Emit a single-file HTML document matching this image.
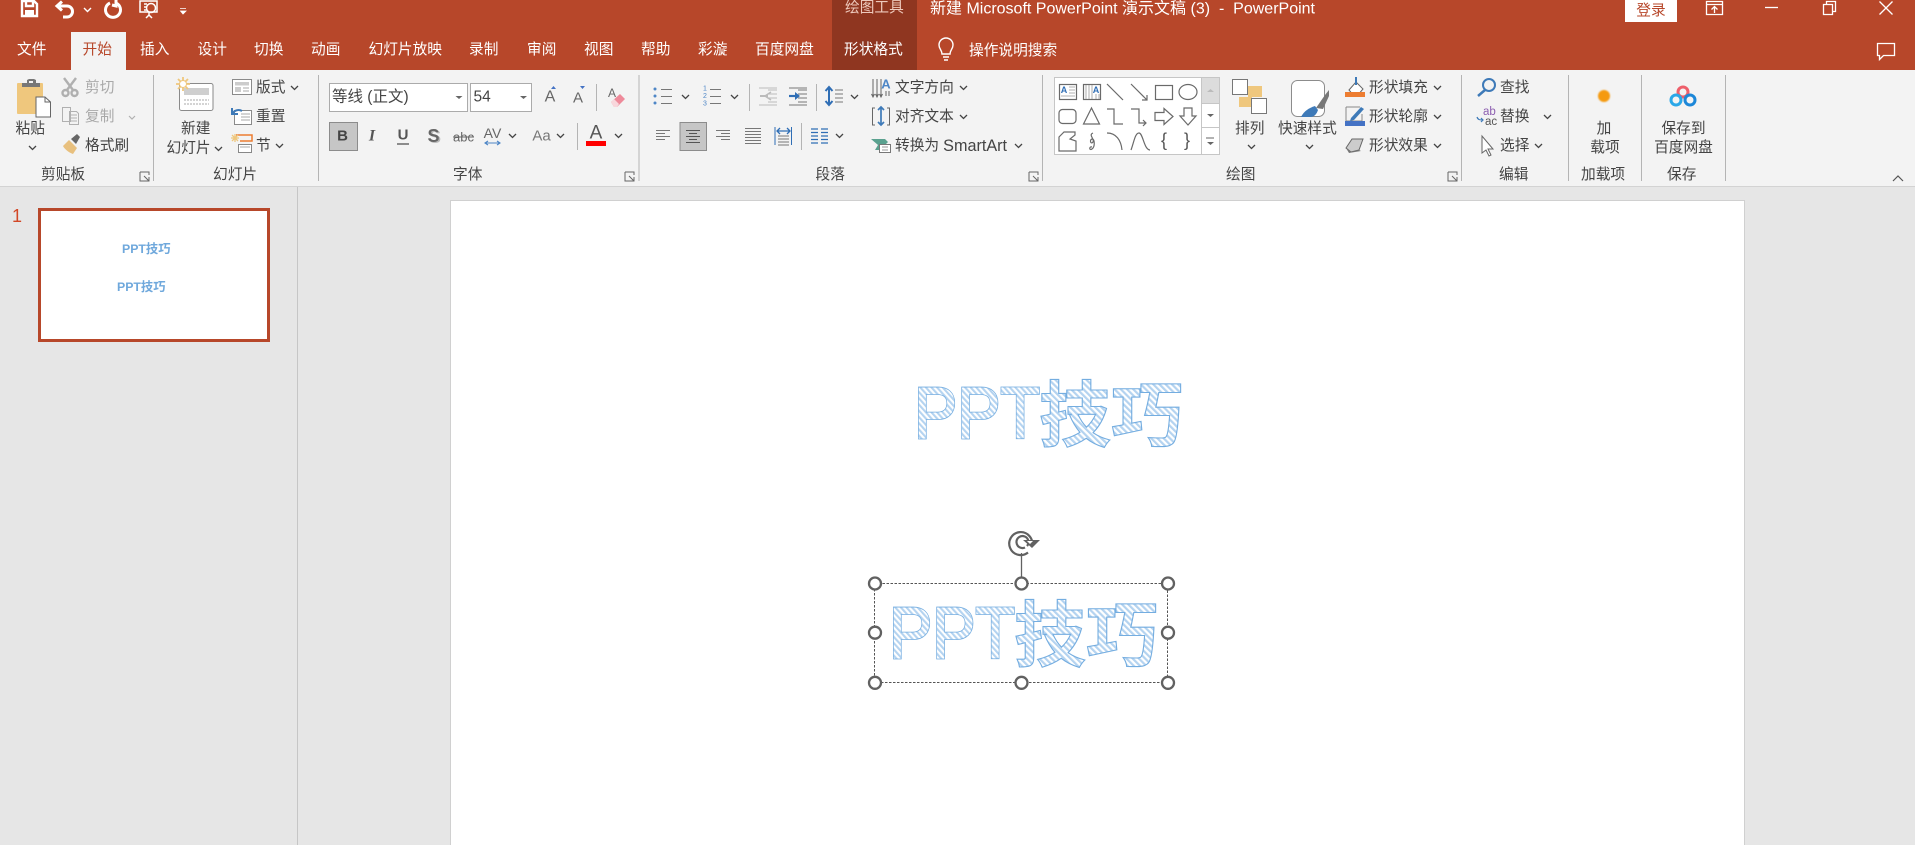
<!DOCTYPE html>
<html lang="zh"><head><meta charset="utf-8"><title>PowerPoint</title>
<style>
html,body{margin:0;padding:0;width:1915px;height:845px;overflow:hidden;background:#e6e6e6}
svg{display:block;position:absolute;left:0;top:0}
text{font-family:"Liberation Sans","Noto Sans CJK SC",sans-serif;dominant-baseline:central;font-size:14.7px;fill:#444;stroke:none}
.w text,text.w{fill:#fff}
.g text{fill:#a9a9a9}
.m{text-anchor:middle}
.i{fill:none;stroke:#6a6a6a;stroke-width:1.2}
.q{fill:none;stroke:#fff;stroke-width:2}
text.t{font-family:"Liberation Sans",sans-serif;font-size:72px;fill:url(#h);stroke:#74ade0;stroke-width:2.8;dominant-baseline:alphabetic}
text.t2{font-family:"Liberation Sans",sans-serif;font-size:72px;fill:url(#h);stroke:url(#h);stroke-width:1.2;dominant-baseline:alphabetic}
text.k{font-family:"Noto Sans CJK SC",sans-serif;font-weight:bold;font-size:72px;fill:url(#h);stroke:#74ade0;stroke-width:1.1;dominant-baseline:alphabetic}
</style></head><body>
<svg width="1915" height="845" viewBox="0 0 1915 845" xmlns="http://www.w3.org/2000/svg">
<defs>
<pattern id="h" patternUnits="userSpaceOnUse" width="4.4" height="4.4" patternTransform="rotate(-45)"><rect width="4.4" height="4.4" fill="#fff"/><rect width="2.2" height="4.4" fill="#b4d3f0"/></pattern>
<path id="c" d="M0 0l3.500 3.500L7 0" fill="none" stroke="#444" stroke-width="1.300"/>
<path id="da" d="M0 0h7l-3.500 3z" fill="#666"/>
<path id="l" d="M0 0v9h9M4 4l5 5M9 5v4H5M0 0h9v3" fill="none" stroke="#666" stroke-width="1"/>
</defs>
<rect width="1915" height="845" fill="#e6e6e6"/>
<!-- title + tabs -->
<rect width="1915" height="70" fill="#b7472a"/>
<rect x="832" width="85" height="70" fill="#8f3620"/>
<rect x="71" y="32" width="55" height="38" fill="#f3f3f3"/>
<!-- QAT -->
<g class="q">
<path d="M22 1h12l3 3v12H22zM26 1v5h7V1" stroke-width="2.400"/>
<rect x="25" y="10" width="9" height="6" fill="#fff" stroke="none"/>
<path d="M58 6h9a5.500 5.500 0 0 1 0 11h-4M62 1.500L57 6l5 4.500" stroke-width="3"/>
<path d="M110 3a7.500 7.500 0 1 0 6 0M116 0v6l-4-1" stroke-width="3"/>
<path d="M140 1h17v11h-17zM144 4h3M144 7h3M144 10h3M149 15l-3 3M149 15l3 3M149 12v4" stroke-width="1.500"/>
<circle cx="151" cy="8" r="4.500" stroke-width="1.500"/>
</g>
<path d="M84 8l3.500 3.500L91 8" fill="none" stroke="#fff" stroke-width="1.400"/>
<path d="M180 8.500h6M180.500 11h5.500l-3 3z" fill="#fff" stroke="#fff" stroke-width=".8"/>
<g class="w">
<text x="17" y="50">文件</text><text x="140" y="50">插入</text><text x="197.500" y="50">设计</text><text x="254" y="50">切换</text><text x="311" y="50">动画</text><text x="368.500" y="50">幻灯片放映</text><text x="469" y="50">录制</text><text x="527" y="50">审阅</text><text x="584" y="50">视图</text><text x="641" y="50">帮助</text><text x="698" y="50">彩漩</text><text x="755" y="50">百度网盘</text><text x="844" y="50">形状格式</text><text x="969" y="51">操作说明搜索</text>
<text x="930" y="9" style="font-size:16px">新建 Microsoft PowerPoint 演示文稿 (3)&#160;&#160;-&#160;&#160;PowerPoint</text>
</g>
<text x="82.500" y="50" style="fill:#b7472a">开始</text>
<text x="845" y="8" style="fill:#eec9bc">绘图工具</text>
<path d="M942 54c0-4-3-5-3-9a7 7 0 0 1 14 0c0 4-3 5-3 9zM943 57h6M944 60h4" fill="none" stroke="#fff" stroke-width="1.400"/>
<rect x="1625" width="52" height="22" fill="#fff"/>
<text x="1651" y="11" class="m" style="fill:#b7472a">登录</text>
<g fill="none" stroke="#fff" stroke-width="1.300">
<path d="M1706.500 1.500h16v13h-16zM1706.500 4.500h16M1714.500 13V7M1711.500 9.500l3-3 3 3"/>
<path d="M1765 7.500h13"/>
<path d="M1823.500 4.500h9v10h-9zM1826.500 4.500v-3h9v10h-3"/>
<path d="M1879.500 1.500l13 13M1892.500 1.500l-13 13"/>
<path d="M1877.500 43.500h17v12h-11l-4 4v-4h-2z"/>
</g>
<!-- ribbon -->
<rect y="70" width="1915" height="116" fill="#f3f3f3"/>
<rect y="186" width="1915" height="1" fill="#d3d3d3"/>
<g fill="#b4b4b4">
<rect x="153" y="75" width="1" height="106"/><rect x="318" y="75" width="1" height="106"/><rect x="638.500" y="75" width="1" height="106"/><rect x="1042" y="75" width="1" height="106"/><rect x="1461" y="75" width="1" height="106"/><rect x="1568" y="75" width="1" height="106"/><rect x="1641" y="75" width="1" height="106"/><rect x="1725" y="75" width="1" height="106"/>
<rect x="596" y="84" width="1" height="27"/><rect x="577" y="123" width="1" height="27"/><rect x="749" y="84" width="1" height="27"/><rect x="816" y="84" width="1" height="27"/><rect x="801" y="123" width="1" height="27"/>
</g>
<text x="41" y="175">剪贴板</text><text x="213" y="175">幻灯片</text><text x="453" y="175">字体</text><text x="815.500" y="175">段落</text><text x="1226" y="175">绘图</text><text x="1499" y="175">编辑</text><text x="1581" y="175">加载项</text><text x="1667" y="175">保存</text>
<use href="#l" x="140" y="172"/><use href="#l" x="625" y="172"/><use href="#l" x="1029" y="172"/><use href="#l" x="1448" y="172"/>
<path d="M1893 181l5-5 5 5" fill="none" stroke="#555" stroke-width="1.200"/>
<!-- clipboard -->
<rect x="17" y="83" width="26" height="31" rx="1" fill="#efc77d"/>
<path d="M22 87v-4h5v-3l2-1h5l2 1v3h4v4z" fill="#777"/><rect x="29" y="81" width="4" height="2" fill="#f3f3f3"/>
<path d="M36 97h9l5.500 5v15H36z" fill="#fff" stroke="#666"/><path d="M45 97v5h5.500" fill="none" stroke="#666"/>
<text x="15.500" y="129">粘贴</text><use href="#c" x="29" y="146"/>
<g fill="none" stroke="#b0b0b0" stroke-width="2.400"><path d="M64 78l9 12M76 78l-9 12"/><circle cx="65.500" cy="93" r="3"/><circle cx="74.500" cy="93" r="3"/></g>
<g fill="#f3f3f3" stroke="#b0b0b0"><path d="M62.500 107.500h8v14h-8zM69.500 111.500h7l2 2v11h-9z"/><path d="M71 115h6M71 118h6M71 121h6"/></g>
<g class="g"><text x="85" y="88">剪切</text><text x="85" y="117">复制</text></g>
<path d="M129 116l3 3 3-3" fill="none" stroke="#b0b0b0" stroke-width="1.200"/>
<path d="M63 146l6-6 8 8-4 6c-3-1-8-4-10-8z" fill="#e8c07e"/><path d="M71 139l6-5 3 3-4 7z" fill="#666"/>
<text x="85" y="146">格式刷</text>
<!-- slides -->
<rect x="179.500" y="83.500" width="33.500" height="27" rx="2" fill="#fff" stroke="#8a8a8a"/>
<rect x="184" y="88" width="25" height="7" fill="#cfcfcf"/><path d="M184 100h25M184 104h25" stroke="#aaa" stroke-dasharray="2 1"/>
<path d="M183 77v14M176 84h14M178 79l10 10M188 79l-10 10" stroke="#efc77d" stroke-width="1.800"/><circle cx="183" cy="84" r="3.500" fill="#fff" stroke="#efc77d"/>
<text x="181" y="129">新建</text><text x="166.500" y="148.500">幻灯片</text><use href="#c" x="215" y="147"/>
<rect x="232.500" y="79.500" width="19" height="15" fill="#fff" stroke="#8a8a8a"/><rect x="235" y="82" width="14" height="3.500" fill="#ccc"/><rect x="235" y="87" width="6" height="5" fill="#ccc"/><path d="M243 88h6M243 91h6" stroke="#aaa"/>
<text x="256" y="88">版式</text><use href="#c" x="291" y="86"/>
<rect x="234.500" y="110.500" width="17" height="14" fill="#fff" stroke="#8a8a8a"/><path d="M241 114h9M241 117h9M241 120h9" stroke="#aaa"/>
<path d="M233 113a6 5 0 0 1 9-2M232 108v6h6" fill="none" stroke="#3e7ab8" stroke-width="2"/>
<text x="256" y="117">重置</text>
<path d="M236 135h16v6h-12" fill="none" stroke="#ed7d31" stroke-width="1.500"/><rect x="238.500" y="144.500" width="13" height="8" fill="#fff" stroke="#888"/><path d="M240 147h10" stroke="#aaa"/>
<path d="M232 135l6 6M238 135l-6 6M235 134v8M231 138h8" stroke="#efc77d" stroke-width="1.300"/>
<text x="256" y="146">节</text><use href="#c" x="276" y="144"/>
<!-- font -->
<rect x="329.500" y="83.500" width="138" height="28" fill="#fff" stroke="#ababab"/><rect x="470.500" y="83.500" width="61" height="28" fill="#fff" stroke="#ababab"/>
<text x="332" y="97" style="font-size:15.500px">等线 (正文)</text><text x="473.500" y="97" style="font-size:15.500px">54</text>
<use href="#da" x="455.500" y="96"/><use href="#da" x="520" y="96"/>
<text x="550" y="97" class="m" style="font-size:16px;fill:#666">A</text><path d="M551 89l2.500-3 2.500 3z" fill="#4472c4"/>
<text x="578" y="98" class="m" style="font-size:15px;fill:#666">A</text><path d="M580 86h5l-2.500 3z" fill="#4472c4"/>
<text x="612" y="93" class="m" style="font-size:12px;fill:#666">A</text><path d="M611 102l9-8 5 5-8 8h-3z" fill="#ee8a9a"/><path d="M611 102l3-3 5 5-2 3h-3z" fill="#f8d7dc"/>
<rect x="329.500" y="122.500" width="28" height="28" fill="#c6c6c6" stroke="#8c8c8c"/>
<text x="342.500" y="136" class="m" style="font-weight:bold;font-size:15px">B</text>
<text x="372" y="136" class="m" style="font-style:italic;font-weight:bold;font-family:'Liberation Serif',serif;font-size:16px;fill:#555">I</text>
<text x="403" y="135" class="m" style="font-size:15px;font-weight:bold;fill:#555">U</text><path d="M397 144h12" stroke="#555" stroke-width="1.300"/>
<text x="435" y="137" class="m" style="font-size:18px;font-weight:bold;fill:#bbb">S</text><text x="433.500" y="136" class="m" style="font-size:18px;font-weight:bold;fill:#666">S</text>
<text x="463.500" y="137" class="m" style="font-size:13px;fill:#666">abc</text><path d="M453 137h21" stroke="#666"/>
<text x="492.500" y="133" class="m" style="font-size:14px;fill:#666">AV</text><path d="M485 143h15M488 141l-3 2 3 2M497 141l3 2-3 2" fill="none" stroke="#4e86c6" stroke-width="1.100"/>
<use href="#c" x="509" y="134"/>
<text x="541.500" y="136" class="m" style="font-size:15px;fill:#777">Aa</text><use href="#c" x="557" y="134"/>
<text x="596" y="133" class="m" style="font-size:19px;fill:#555">A</text><rect x="586" y="141" width="20" height="5" fill="#f00"/>
<use href="#c" x="615" y="134"/>
<!-- paragraph -->
<g stroke="#777" stroke-width="1" fill="none">
<path d="M661 89.500h11M661 96.500h11M661 103.500h11"/><path d="M710 89.500h11M710 96.500h11M710 103.500h11"/>
<path d="M768 90h9M768 94h9M768 98h9M768 102h9M759 105h18M759 88h18" stroke="#bbb"/>
<path d="M798 90h9M798 94h9M798 98h9M798 102h9M789 105h18M789 88h18"/>
<path d="M835 90h8M835 94h8M835 98h8M835 102h8"/>
<path d="M656 130.500h14M656 133.500h9M656 136.500h14M656 139.500h9"/>
<path d="M686 130.500h14M689 133.500h8M686 136.500h14M689 139.500h8"/>
<path d="M716 130.500h14M721 133.500h9M716 136.500h14M721 139.500h9"/>
<path d="M745 128.500h16M745 131.500h16M745 134.500h16M745 137.500h16M745 140.500h16M745 143.500h16" stroke-width="1"/>
</g>
<g fill="#4e86c6"><circle cx="655" cy="89" r="1.500"/><circle cx="655" cy="96" r="1.500"/><circle cx="655" cy="103" r="1.500"/></g>
<text x="703" y="89" style="font-size:7px;fill:#4e86c6">1</text><text x="703" y="96.500" style="font-size:7px;fill:#4e86c6">2</text><text x="703" y="104" style="font-size:7px;fill:#4e86c6">3</text>
<use href="#c" x="682" y="95"/><use href="#c" x="731" y="95"/><use href="#c" x="851" y="95"/><use href="#c" x="836" y="134"/>
<path d="M771 92l-6 4 6 4" fill="none" stroke="#bbb" stroke-width="1.500"/><path d="M760 96h8" stroke="#bbb" stroke-width="2"/>
<path d="M795 92l5 4-5 4z" fill="#2f6eb5"/><path d="M789 96h8" stroke="#2f6eb5" stroke-width="2.200"/>
<path d="M829 87v18M825.500 91l3.500-4 3.500 4M825.500 101l3.500 4 3.500-4" fill="none" stroke="#2f6eb5" stroke-width="2"/>
<rect x="680" y="122.500" width="26.500" height="28" fill="#c6c6c6" stroke="#8c8c8c"/>
<path d="M686 130.500h14M689 133.500h8M686 136.500h14M689 139.500h8M686 142.500h14" stroke="#555"/>
<rect x="774.500" y="127" width="1" height="18" fill="#2f6eb5"/><rect x="791" y="127" width="1" height="18" fill="#2f6eb5"/>
<path d="M778 136h11M778 139h11M778 142h11M778 145h11" stroke="#777"/><path d="M777 131h13M780 128l-3 3 3 3M787 128l3 3-3 3" fill="none" stroke="#2f6eb5" stroke-width="1.300"/>
<path d="M811 129h7M821 129h7M811 132.500h7M821 132.500h7M811 136h7M821 136h7M811 139.500h7M821 139.500h7M811 143h7M821 143h7" stroke="#2f6eb5" stroke-width="1.200"/>
<!-- text options -->
<path d="M873 79v17M877 79v17M881 79v17M871.500 94l1.500 3 1.500-3M875.500 94l1.500 3 1.500-3M879.500 94l1.500 3 1.500-3" fill="none" stroke="#666"/>
<text x="886" y="84" class="m" style="font-size:13px;font-weight:bold;fill:#4e86c6">A</text><path d="M886 91v5M889 91v5" stroke="#666"/>
<text x="895" y="88">文字方向</text><use href="#c" x="960" y="86"/>
<path d="M875 108h-2.500v17h2.500M887 108h2.500v17H887" fill="none" stroke="#666"/>
<path d="M881 107v18M878 110l3-3 3 3M878 122l3 3 3-3" fill="none" stroke="#3e7ab8" stroke-width="1.700"/>
<text x="895" y="117">对齐文本</text><use href="#c" x="960" y="115"/>
<path d="M871 139h14l3 3-3 3 3 3-3 2h-10l3-5z" fill="#5aa18f"/><rect x="879.500" y="144.500" width="11" height="8" fill="#fff" stroke="#777"/><path d="M882 147h6M882 150h6" stroke="#999"/>
<text x="895" y="146">转换为 <tspan style="font-size:16.200px">SmartArt</tspan></text><use href="#c" x="1015" y="144"/>
<!-- gallery -->
<rect x="1054.500" y="77.500" width="165" height="77" fill="#fff" stroke="#c6c6c6"/>
<rect x="1201.500" y="77.500" width="18" height="26" fill="#dcdcdc" stroke="#c6c6c6"/>
<rect x="1201.500" y="103.500" width="18" height="24" fill="#fff" stroke="#c6c6c6"/>
<rect x="1201.500" y="127.500" width="18" height="27" fill="#fff" stroke="#c6c6c6"/>
<path d="M1207 92l3.500-3 3.500 3z" fill="#bbb"/><use href="#da" x="1207" y="114"/><use href="#da" x="1207" y="142"/><path d="M1206 138h8" stroke="#666"/>
<g class="i">
<rect x="1059.500" y="84.500" width="17" height="15"/><text x="1064" y="90" class="m" style="font-size:9px;font-weight:bold;fill:#2f6eb5">A</text><path d="M1069 87h6M1069 90h6M1069 93h6M1061 96h14" stroke-width=".8" stroke="#999"/>
<rect x="1083.500" y="84.500" width="17" height="15"/><text x="1096" y="90" class="m" style="font-size:9px;font-weight:bold;fill:#2f6eb5">A</text><path d="M1086 85v14M1089 85v14M1092 85v14M1096 94v5M1099 94v5" stroke-width=".8" stroke="#999"/>
<path d="M1107 84l16 16"/>
<path d="M1131 84l16 16M1142 100h5v-5"/>
<rect x="1155.500" y="85.500" width="17" height="14"/>
<ellipse cx="1188" cy="92" rx="9" ry="7.500"/>
<rect x="1059" y="109.500" width="17" height="14" rx="3.500"/>
<path d="M1091.500 108l-8 16h16z"/>
<path d="M1107 109h7v15h9"/>
<path d="M1131 109h8v14h7M1143 120l3 3-3 3"/>
<path d="M1155 112.500h9v-4l9 8-9 8v-4h-9z"/>
<path d="M1184 108h8v8h4l-8 9-8-9h4z"/>
<path d="M1059 137l5-5h11v3l-5 4 6 2v10h-17z"/>
<path d="M1093 133c-5 2 2 6 0 9-2 3-4-2-1-3 3 0 3 8 0 10s-3-3 0-2"/>
<path d="M1107 133c9 0 14 7 15 17"/>
<path d="M1131 150c3-8 4-17 8-17s5 17 11 17"/>
<text x="1164" y="140" class="m" style="font-size:18px;fill:#555">{</text>
<text x="1187" y="140" class="m" style="font-size:18px;fill:#555">}</text>
</g>
<!-- arrange -->
<rect x="1248" y="86" width="14" height="11" fill="#efc77d"/><rect x="1239" y="97" width="13" height="10" fill="#efc77d"/>
<rect x="1232.500" y="79.500" width="15" height="15" fill="#fff" stroke="#777"/><rect x="1251.500" y="98.500" width="15" height="15" fill="#fff" stroke="#777"/>
<text x="1235" y="129">排列</text><use href="#c" x="1248" y="145"/>
<rect x="1291.500" y="80.500" width="33" height="36" rx="6" fill="#fff" stroke="#8c8c8c"/>
<path d="M1316 108l9-13 4-5v6l-6 13z" fill="#777"/><path d="M1301 117c3-6 8-9 14-11l3 4c-1 3-3 7-8 7z" fill="#3e7ab8"/>
<text x="1278" y="129">快速样式</text><use href="#c" x="1306" y="145"/>
<!-- shape buttons -->
<path d="M1349 90l7-8 7 7-6 7h-3z" fill="#fff" stroke="#666"/><path d="M1356 77v8" stroke="#3e7ab8" stroke-width="2"/><rect x="1345" y="92" width="20" height="5" fill="#ed7d31"/>
<text x="1369" y="88">形状填充</text><use href="#c" x="1434" y="86"/>
<path d="M1346 107h14M1346 107v14h16v-7" fill="none" stroke="#888"/><path d="M1351 118l10-11 3 2-10 11-4 1z" fill="#3e7ab8"/><rect x="1345" y="121" width="20" height="5" fill="#4472c4"/>
<text x="1369" y="117">形状轮廓</text><use href="#c" x="1434" y="115"/>
<path d="M1346 148l6-9h11l-4 11-8 2z" fill="#ccc" stroke="#666"/><path d="M1346 148l5 4 8-2 2 1-12 2z" fill="#777"/>
<text x="1369" y="146">形状效果</text><use href="#c" x="1434" y="144"/>
<!-- edit -->
<circle cx="1489" cy="85" r="6" fill="none" stroke="#3e7ab8" stroke-width="2"/><path d="M1485 90l-7 6" stroke="#3e7ab8" stroke-width="2.500"/>
<text x="1500" y="88">查找</text>
<text x="1483" y="112" style="font-size:11.500px;fill:#8d5fb0">ab</text><text x="1485" y="122" style="font-size:11.500px;fill:#555">ac</text><path d="M1477 117c1 3 3 3 6 3M1481 118l2 2-2 2" fill="none" stroke="#3e7ab8" stroke-width="1.200"/>
<text x="1500" y="117">替换</text><use href="#c" x="1544" y="115"/>
<path d="M1482 136v17l4-3 3 6 2-1-3-6h5z" fill="#fff" stroke="#666"/>
<text x="1500" y="146">选择</text><use href="#c" x="1535" y="144"/>
<!-- addin + save -->
<circle cx="1604" cy="96" r="6" fill="#f59a10" style="filter:blur(.8px)"/>
<text x="1604" y="129" class="m">加</text><text x="1605" y="148" class="m">载项</text>
<circle cx="1683" cy="92" r="5" fill="none" stroke="#ee5f6b" stroke-width="3"/><circle cx="1676" cy="100" r="5" fill="none" stroke="#2aa7e8" stroke-width="3"/><circle cx="1690" cy="100" r="5" fill="none" stroke="#1c87d8" stroke-width="3"/>
<text x="1683.500" y="129" class="m">保存到</text><text x="1683.500" y="148" class="m">百度网盘</text>
<!-- left pane -->
<rect x="297" y="187" width="1" height="658" fill="#c6c6c6"/>
<text x="12" y="216" style="font-size:18px;fill:#d24726">1</text>
<rect x="39.500" y="209.500" width="229" height="131" fill="#fff" stroke="#b7472a" stroke-width="3"/>
<text x="122" y="249" style="font-size:12.300px;font-weight:bold;fill:#6fa8dc">PPT技巧</text>
<text x="117" y="287" style="font-size:12.300px;font-weight:bold;fill:#6fa8dc">PPT技巧</text>
<!-- slide -->
<rect x="450.500" y="200.500" width="1294" height="660" fill="#fff" stroke="#d0d0d0"/>
<g transform="translate(2,0)">
<text class="t" transform="translate(912,438) scale(.9,1)">PPT</text>
<text class="t2" transform="translate(912,438) scale(.9,1)" aria-hidden="true">PPT</text>
<text class="k" x="1037" y="441">技巧</text>
</g>
<g transform="translate(-23,220)">
<text class="t" transform="translate(912,438) scale(.9,1)">PPT</text>
<text class="t2" transform="translate(912,438) scale(.9,1)" aria-hidden="true">PPT</text>
<text class="k" x="1037" y="441">技巧</text>
</g>
<!-- selection -->
<rect x="874.500" y="583.500" width="293" height="99" fill="none" stroke="#555" stroke-width="1" stroke-dasharray="2.500 1.500"/>
<path d="M1021.500 553v24" stroke="#616161" stroke-width="1.300"/>
<g fill="none" stroke="#616161" stroke-width="2.200"><path d="M1032 546a11.500 11.500 0 1 0-4 6.500"/><path d="M1027 546a6 6 0 1 0-2 1.500"/></g>
<path d="M1023 540h17l-8 8z" fill="#616161"/><path d="M1027 541h6l-3 3z" fill="#fff"/>
<g fill="#fff" stroke="#616161" stroke-width="2.300">
<circle cx="875" cy="583.500" r="6"/><circle cx="1021.500" cy="583.500" r="6"/><circle cx="1168" cy="583.500" r="6"/>
<circle cx="875" cy="632.700" r="6"/><circle cx="1168" cy="632.700" r="6"/>
<circle cx="875" cy="682.800" r="6"/><circle cx="1021.500" cy="682.800" r="6"/><circle cx="1168" cy="682.800" r="6"/>
</g>
</svg>
</body></html>
